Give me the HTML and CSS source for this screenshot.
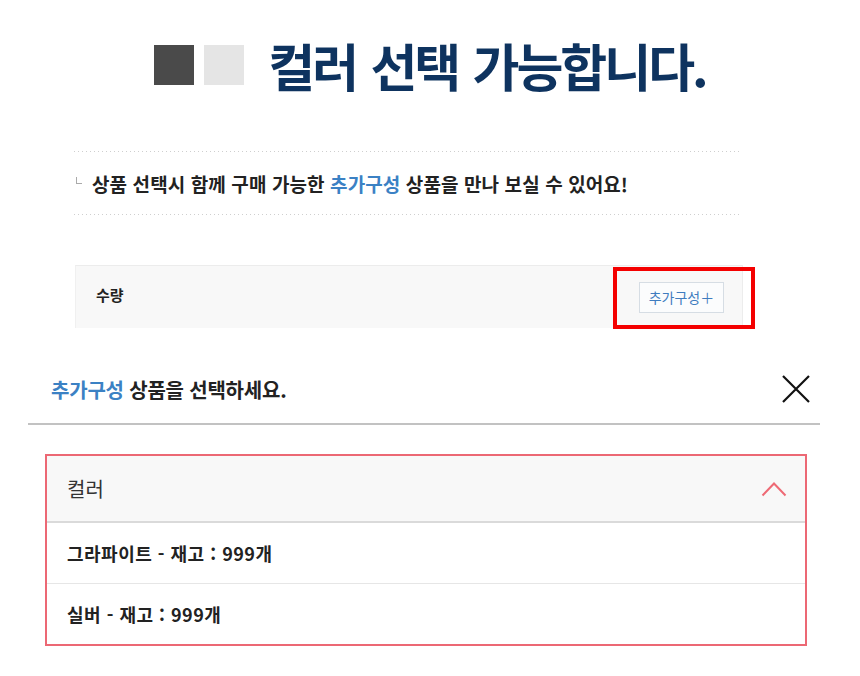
FILE: index.html
```html
<!DOCTYPE html>
<html lang="ko">
<head>
  <meta charset="UTF-8" />
  <meta name="viewport" content="width=device-width, initial-scale=1.0" />
  <title>추가구성 안내</title>
  <link rel="stylesheet" href="styles.css">
</head>
<body>
  <header class="headline">
    <span class="swatch swatch-dark"></span>
    <span class="swatch swatch-light"></span>
    <h1>컬러 선택 가능합니다.</h1>
  </header>

  <section class="info">
    <span class="info-mark"></span>
    <p>상품 선택시 함께 구매 가능한 <em>추가구성</em> 상품을 만나 보실 수 있어요!</p>
  </section>

  <section class="qty">
    <span class="qty-label">수량</span>
    <span class="highlight">
      <button class="add-btn" type="button">추가구성＋</button>
    </span>
  </section>

  <section class="modal">
    <div class="modal-head">
      <h2><em>추가구성</em> 상품을 선택하세요.</h2>
      <button class="close" type="button" aria-label="닫기">
        <svg width="30" height="30" viewBox="0 0 30 30">
          <path d="M2 2 L28 28 M28 2 L2 28" stroke="#111" stroke-width="2.2" fill="none"/>
        </svg>
      </button>
    </div>

    <div class="options">
      <div class="opt-head">
        <span>컬러</span>
        <svg width="26" height="16" viewBox="0 0 26 16">
          <path d="M1.5 14.5 L13 2.5 L24.5 14.5" stroke="#ee6a75" stroke-width="2" fill="none"/>
        </svg>
      </div>
      <div class="opt-item">그라파이트 - 재고 : 999개</div>
      <div class="opt-item">실버 - 재고 : 999개</div>
    </div>
  </section>
</body>
</html>
```

FILE: styles.css
```css
body {
  margin: 0;
  font-family: "Noto Sans CJK KR", "Noto Sans", sans-serif;
  background-color: #fff;
  color: #222;
}
em {
  font-style: normal;
  color: #3b81c4;
}
.headline {
  display: flex;
  align-items: center;
  justify-content: center;
  padding-top: 45px;
  height: 40px;
}
.swatch {
  width: 40px;
  height: 40px;
}
.swatch-dark {
  background-color: #4a4a4a;
  margin-right: 10px;
}
.swatch-light {
  background-color: #e5e5e5;
  margin-right: 24px;
}
.headline h1 {
  margin: 0;
  font-size: 51px;
  line-height: 1;
  font-weight: 700;
  letter-spacing: -3px;
  word-spacing: 3px;
  color: #0e335f;
}
.info {
  display: flex;
  align-items: center;
  margin: 66px 118px 0 74px;
  height: 64px;
  background-image:
    linear-gradient(to right, #cfcfcf 1px, transparent 1px),
    linear-gradient(to right, #cfcfcf 1px, transparent 1px);
  background-size: 4px 1px, 4px 1px;
  background-repeat: repeat-x;
  background-position: 0 0, 0 100%;
}
.info-mark {
  width: 5px;
  height: 6px;
  margin: 0 10px 6px 2px;
  border-left: 1px solid #aaa;
  border-bottom: 1px solid #aaa;
}
.info p {
  margin: 0;
  font-size: 19px;
  font-weight: 700;
  letter-spacing: 0.1px;
}
.qty {
  display: flex;
  align-items: center;
  justify-content: space-between;
  margin: 50px 117px 0 75px;
  height: 62px;
  padding: 0 18px 0 20px;
  background-color: #f8f8f8;
  border-top: 1px solid #ececec;
  border-left: 1px solid #f0f0f0;
  border-right: 1px solid #ececec;
}
.qty-label {
  font-size: 15px;
  font-weight: 700;
  margin-bottom: 6px;
}
.highlight {
  position: relative;
  display: flex;
}
.highlight::after {
  content: "";
  position: absolute;
  left: -26px;
  right: -31px;
  top: -15px;
  bottom: -16px;
  border: 4px solid #f40000;
}
.add-btn {
  width: 85px;
  height: 31px;
  padding: 0;
  background-color: #fbfcfd;
  border: 1px solid #d6dde4;
  font-family: inherit;
  font-size: 14px;
  color: #3f7cbf;
}
.modal {
  margin: 27px 40px 0 28px;
}
.modal-head {
  display: flex;
  align-items: center;
  justify-content: space-between;
  height: 68px;
  padding: 0 9px 0 23px;
  border-bottom: 2px solid #c2c2c2;
}
.modal-head h2 {
  margin: 0;
  font-size: 20px;
  font-weight: 700;
  letter-spacing: -0.2px;
}
.close {
  display: flex;
  padding: 0;
  background: none;
  border: 0;
}
.options {
  margin: 29px 13px 0 17px;
  border: 2px solid #ec6874;
}
.opt-head {
  display: flex;
  align-items: center;
  justify-content: space-between;
  height: 65px;
  padding: 0 18px 0 20px;
  background-color: #f8f8f8;
  border-bottom: 2px solid #dadada;
  font-size: 20px;
  color: #333;
}
.opt-item {
  display: flex;
  align-items: center;
  height: 60px;
  padding-left: 20px;
  font-size: 18px;
  font-weight: 700;
  letter-spacing: 0.5px;
}
.opt-item + .opt-item {
  border-top: 1px solid #e6e6e6;
}
```
